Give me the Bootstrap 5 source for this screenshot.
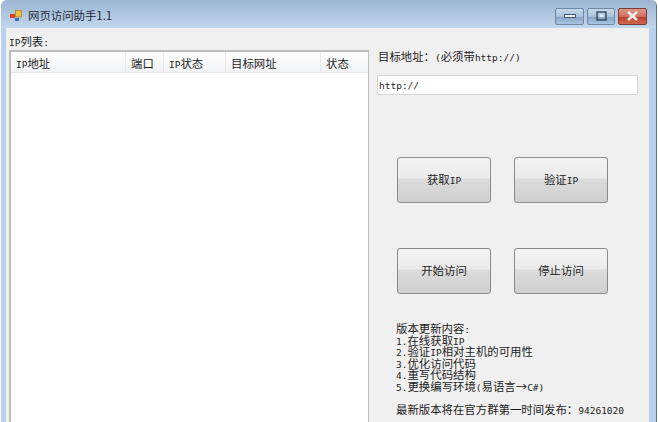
<!DOCTYPE html>
<html lang="zh">
<head>
<meta charset="utf-8">
<title>网页访问助手1.1</title>
<link href="https://cdn.jsdelivr.net/npm/bootstrap@5.3.0/dist/css/bootstrap.min.css" rel="stylesheet">
<style>
html,body{height:422px;overflow:hidden;background:#fff;margin:0}
body{font-family:"Noto Sans CJK SC","Liberation Sans",sans-serif;font-size:11.4px;color:#1c1c1c}
.win-frame{width:656px;height:422px;margin-left:1px;border-radius:6px 6px 0 0;background:#b9d1ea;padding:0 7px 0 5px;border-right:1px solid #5a7288}
.title-bar{height:28px;margin:0 -7px 0 -5px;padding:7px 9px 3px 9px;background:linear-gradient(#9cb6d2,#c1d7ed);border-radius:6px 6px 0 0}
.title-text{font-size:11.4px;color:#1d2a3a;margin-left:6px}
.cap-btn{height:17px;border:1px solid #6d88a4;border-radius:2px;padding:0;display:flex;align-items:center;justify-content:center;background:linear-gradient(#c5d8ea 0,#a8c2dc 50%,#84a4c4 52%,#a9c5e0 100%)}
.cap-min{width:29px}.cap-max{width:28px;margin:0 3px}
.cap-close{width:29px;border-color:#7c3a33;background:linear-gradient(#dc9a8c 0,#cf6f5e 50%,#b83a28 52%,#d06a50 100%)}
.client{background:#f0f0f0;height:394px;padding-left:3px;overflow:hidden}
.left-col{width:360px;flex:none}
.ip-label{height:22px;padding-top:5px;line-height:16px}
.ip-list{height:400px;border:2px solid #bcbcbc;border-right-width:1px;border-bottom:0;background:#fff}
.list-head{height:21px;background:linear-gradient(#fff,#f1f2f4);border-bottom:1px solid #e3e5e8;line-height:22px}
.list-head>div{border-right:1px solid #e8e9eb;padding-left:5px;height:20px;flex:none}
.w-a{width:115px}.w-b{width:38px}.w-c{width:62px}.w-d{width:95px}.w-e{width:48px;border-right:0!important}
.right-col{width:261px;margin-left:8px;flex:none}
.target-label{height:47px;padding:20px 0 0 1px;line-height:16px}
.target-input{height:20px;border:1px solid #d6d6d6;border-radius:0;padding:0 1px;font-size:9.5px;font-family:"DejaVu Sans Mono",monospace;color:#1c1c1c;box-shadow:none;min-height:0;line-height:18px}
.act-row{padding-left:20px;gap:23px}
.act-row.r1{margin-top:62px}
.act-row.r2{margin-top:45px}
.act-btn{width:94px;height:46px;padding:0;border:1px solid #8a8a8a;border-radius:3px;font-size:11.4px;color:#1c1c1c;background:linear-gradient(#f3f3f3 0,#ebebeb 45%,#dcdcdc 48%,#cfcfcf 100%)}
.notes{margin:29px 0 0 19px;line-height:11.6px}
.notes-foot{margin:8.4px 0 0 19px;line-height:16px;white-space:nowrap}
.latin{font-family:"DejaVu Sans Mono",monospace;font-size:9.5px;line-height:0}
</style>
</head>
<body>
<div class="win-frame">
  <div class="title-bar d-flex align-items-center">
    <svg width="12" height="12" viewBox="0 0 12 12"><rect x="0" y="4" width="5" height="4" fill="#d8402c"/><rect x="5.4" y=".4" width="6" height="6.5" fill="#f0c040" stroke="#b08020" stroke-width=".8"/><rect x="5" y="8" width="4" height="3" fill="#3a6fc0"/></svg>
    <span class="title-text">网页访问助手1.1</span>
    <div class="ms-auto d-flex">
      <div class="cap-btn cap-min"><svg width="12" height="6"><rect x=".5" y="1.5" width="11" height="3" fill="#e8eef5" stroke="#44586e"/></svg></div>
      <div class="cap-btn cap-max"><svg width="11" height="10"><rect x="1" y="1" width="9" height="8" fill="none" stroke="#33475c" stroke-width="1.4"/><rect x="3.5" y="3.5" width="4" height="2.5" fill="#e8eef5"/></svg></div>
      <div class="cap-btn cap-close"><svg width="13" height="10" viewBox="0 0 13 10"><path d="M2 1l9 8M11 1L2 9" stroke="#f4ece8" stroke-width="2.6"/></svg></div>
    </div>
  </div>
  <div class="client d-flex">
    <div class="left-col">
      <div class="ip-label"><span class="latin">IP</span>列表<span class="latin">:</span></div>
      <div class="ip-list">
        <div class="list-head d-flex">
          <div class="w-a"><span class="latin">IP</span>地址</div>
          <div class="w-b">端口</div>
          <div class="w-c"><span class="latin">IP</span>状态</div>
          <div class="w-d">目标网址</div>
          <div class="w-e">状态</div>
        </div>
      </div>
    </div>
    <div class="right-col">
      <div class="target-label">目标地址：<span class="latin">(</span>必须带<span class="latin">http://)</span></div>
      <input class="form-control target-input" type="text" value="http://">
      <div class="act-row r1 d-flex">
        <button class="btn act-btn" type="button">获取<span class="latin">IP</span></button>
        <button class="btn act-btn" type="button">验证<span class="latin">IP</span></button>
      </div>
      <div class="act-row r2 d-flex">
        <button class="btn act-btn" type="button">开始访问</button>
        <button class="btn act-btn" type="button">停止访问</button>
      </div>
      <div class="notes">
        <div>版本更新内容<span class="latin">:</span></div>
        <div><span class="latin">1.</span>在线获取<span class="latin">IP</span></div>
        <div><span class="latin">2.</span>验证<span class="latin">IP</span>相对主机的可用性</div>
        <div><span class="latin">3.</span>优化访问代码</div>
        <div><span class="latin">4.</span>重写代码结构</div>
        <div><span class="latin">5.</span>更换编写环境<span class="latin">(</span>易语言→<span class="latin">C#)</span></div>
      </div>
      <div class="notes-foot">最新版本将在官方群第一时间发布：<span class="latin">94261020</span></div>
    </div>
  </div>
</div>
</body>
</html>
